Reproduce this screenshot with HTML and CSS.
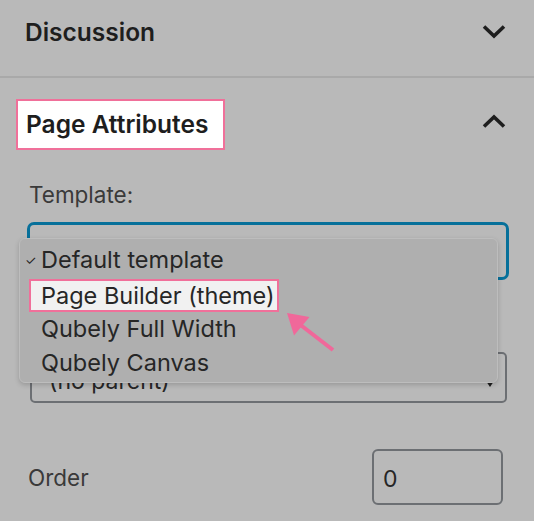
FILE: index.html
```html
<!DOCTYPE html>
<html lang="en">
<head>
    <meta charset="UTF-8">
    <meta name="viewport" content="width=device-width, initial-scale=1.0">
    <title>Page Attributes</title>
    <link rel="stylesheet" href="styles.css">
</head>
<body>
    <div class="sidebar">
        <div class="panel panel-closed">
            <h2 class="panel-title">Discussion</h2>
            <svg class="chevron" viewBox="0 0 24 15" width="24" height="15">
                <polyline points="2,2.5 12,12 22,2.5" />
            </svg>
        </div>

        <div class="panel panel-open">
            <div class="panel-head">
                <h2 class="panel-title highlight">Page Attributes</h2>
                <svg class="chevron chevron-up" viewBox="0 0 24 15" width="24" height="15">
                    <polyline points="2,12.5 12,3 22,12.5" />
                </svg>
            </div>

            <div class="field">
                <label class="field-label">Template:</label>
                <div class="select-wrap">
                    <div class="select focused"></div>
                    <ul class="dropdown">
                        <li class="option"><span class="check">✓</span>Default template</li>
                        <li class="option marked">Page Builder (theme)</li>
                        <li class="option">Qubely Full Width</li>
                        <li class="option">Qubely Canvas</li>
                    </ul>
                </div>
            </div>

            <div class="field field-parent">
                <label class="field-label">Parent Page:</label>
                <div class="select parent">
                    <span>(no parent)</span>
                    <span class="caret"></span>
                </div>
            </div>

            <div class="order-row">
                <label class="field-label">Order</label>
                <div class="number-input">0</div>
            </div>
        </div>

        <!-- annotation arrow -->
        <svg class="pointer" viewBox="0 0 534 521" width="534" height="521">
            <line x1="298" y1="323" x2="333" y2="350" />
            <polygon points="287,313 309.5,317 294,335.5" />
        </svg>
    </div>
</body>
</html>
```

FILE: styles.css
```css
body {
    margin: 0;
    background: #b9b9b9;
    font-family: 'Inter', 'Noto Sans', sans-serif;
    color: #1e1e1e;
}

.sidebar {
    position: relative;
    width: 534px;
    height: 521px;
    overflow: hidden;
}

.panel-title {
    margin: 0;
    font-size: 24.5px;
    font-weight: 600;
    color: #1e1e1e;
}

.chevron polyline {
    fill: none;
    stroke: #1e1e1e;
    stroke-width: 3.6;
}

.panel-closed {
    box-sizing: border-box;
    height: 78px;
    padding: 0 28px 13px 25px;
    display: flex;
    align-items: center;
    justify-content: space-between;
    border-bottom: 2px solid #a9a9a9;
}

.panel-open {
    padding: 21px 0 0 0;
}

.panel-head {
    display: flex;
    align-items: center;
    justify-content: space-between;
    padding: 0 28px 0 16px;
}

.highlight {
    background: #ffffff;
    border: 2px solid #f0709a;
    padding: 0 15px 0 8px;
    line-height: 47px;
}

.chevron-up {
    margin-bottom: 7px;
}

.field {
    padding: 0 27px 0 28px;
}

.field-label {
    display: block;
    font-size: 22.5px;
    line-height: 25px;
    color: #3a3a3a;
}

.field > .field-label {
    margin: 32px 0 15px 1px;
}

.select-wrap {
    position: relative;
}

.select {
    box-sizing: border-box;
    border-radius: 5px;
}

.focused {
    height: 58px;
    margin: 0 -2px 0 -1px;
    border: 3px solid #07709a;
    border-radius: 7px;
}

.dropdown {
    position: absolute;
    top: 16px;
    left: -9px;
    width: 479px;
    box-sizing: border-box;
    margin: 0;
    padding: 4px 0 1px 0;
    list-style: none;
    background: #afafaf;
    border: 1px solid #bdbdbd;
    border-radius: 6px;
    box-shadow: 0 2px 5px rgba(0, 0, 0, 0.18);
    z-index: 2;
}

.option {
    position: relative;
    height: 34.5px;
    line-height: 34.5px;
    padding-left: 21px;
    font-size: 23.5px;
    color: #262626;
}

.check {
    position: absolute;
    left: 5px;
    top: 0;
    font-size: 13px;
}

.marked {
    box-sizing: border-box;
    width: 250px;
    height: 33px;
    line-height: 29px;
    margin: 1px 0 0 9px;
    padding-left: 10px;
    background: #f1f1f1;
    border: 2px solid #f0709a;
}

.field-parent > .field-label {
    margin-top: 30px;
    margin-bottom: 17px;
}

.parent {
    height: 51px;
    margin: 0 0 0 2px;
    border: 2px solid #6c6f73;
    display: flex;
    align-items: center;
    justify-content: space-between;
    padding: 6px 11px 0 17px;
    font-size: 23px;
    color: #262626;
}

.caret {
    width: 0;
    height: 0;
    border-left: 4px solid transparent;
    border-right: 4px solid transparent;
    border-top: 6px solid #1e1e1e;
    margin-top: 6px;
}

.order-row {
    display: flex;
    align-items: center;
    justify-content: space-between;
    padding: 0 31px 0 28px;
    margin-top: 46px;
}

.number-input {
    box-sizing: border-box;
    width: 131px;
    height: 56px;
    border: 2px solid #6c6f73;
    border-radius: 6px;
    padding: 4px 0 0 9px;
    display: flex;
    align-items: center;
    font-size: 23px;
    color: #262626;
}

.pointer {
    position: absolute;
    top: 0;
    left: 0;
    z-index: 3;
    pointer-events: none;
}

.pointer line {
    stroke: #f0689a;
    stroke-width: 4;
}

.pointer polygon {
    fill: #f0689a;
}
```
